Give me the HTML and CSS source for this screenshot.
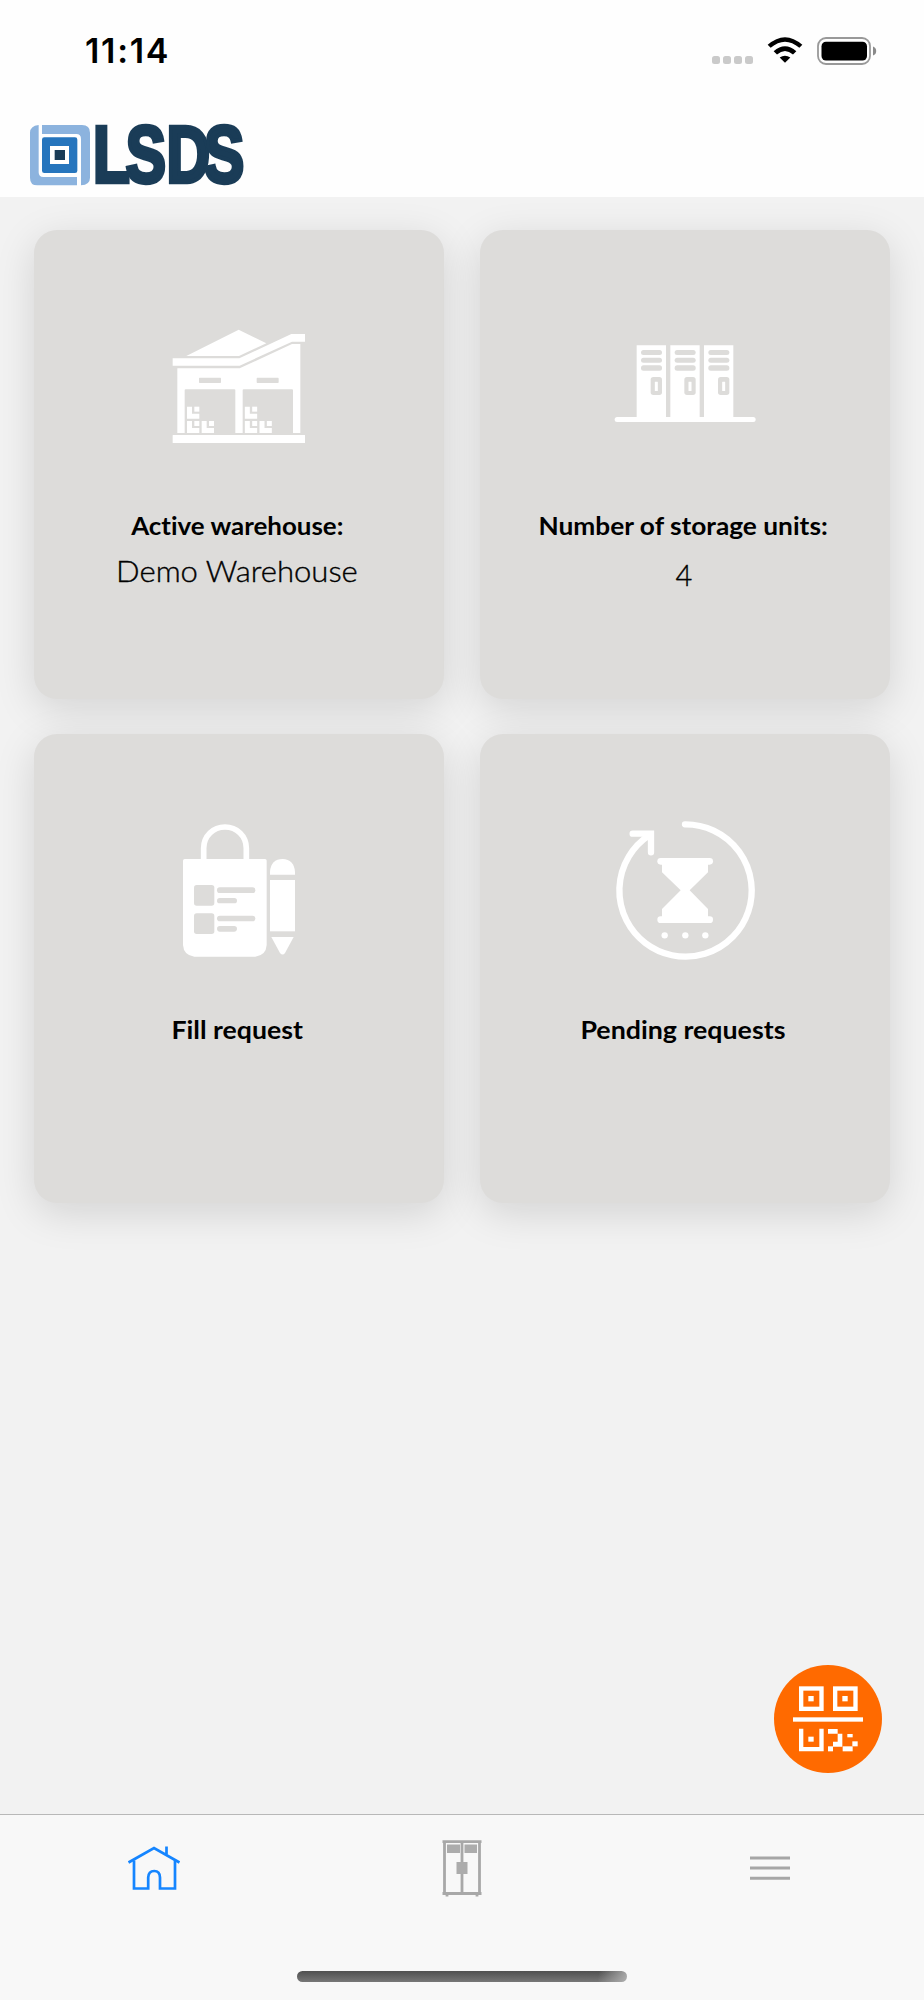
FILE: index.html
```
<!DOCTYPE html>
<html lang="en">
<head>
<meta charset="utf-8">
<title>LSDS</title>
<link rel="stylesheet" href="styles.css">
</head>
<body>
<div class="app">
  <header class="header">
    <div class="status">
      <span class="clock">11:14</span>
      <div class="indicators">
        <div class="signal"><i></i><i></i><i></i><i></i></div>
        <svg class="wifi" viewBox="0 0 108 80" width="36" height="27">
          <path d="M2 23Q54-23 106 23L97 32Q54-5 11 32Z"/>
          <path d="M20 42Q54 13 88 42L78 52Q54 31 30 52Z"/>
          <path d="M38 61Q54 50 70 61L54 77Z"/>
        </svg>
        <svg class="battery" viewBox="0 0 60 28" width="60" height="28">
          <rect x="1" y="1" width="52" height="26" rx="8" fill="none" stroke="#999" stroke-width="1.8"/>
          <rect x="4.5" y="4.7" width="45.5" height="18.8" rx="4.5" fill="#000"/>
          <path d="M56 9.5Q59.2 10.5 59.2 14Q59.2 17.500 56 18.500Z" fill="#8a8a8a"/>
        </svg>
      </div>
    </div>
    <svg class="logo" viewBox="84 366 660 195" width="220" height="65" role="img" aria-label="LSDS">
      <path fill="#8cb3de" d="M116 375V517Q116 531 130 531H231V556H112Q90 556 90 533V398Q90 378 116 375Z"/>
      <path fill="#8cb3de" d="M126 375H246Q270 375 270 398V533Q270 554 243 556V417Q243 402 229 402H126Z"/>
      <rect x="126" y="412" width="106" height="107" rx="7" fill="#2675bd"/>
      <rect x="150" y="438" width="57" height="54" fill="#fff"/>
      <rect x="164" y="450" width="31" height="30" fill="#1a3c57"/>
      <g transform="translate(0 546) scale(.76 1)">
        <text class="logo-text" x="367 496 657 805" y="0">LSDS</text>
      </g>
    </svg>
  </header>

  <main class="content">
    <section class="cards">
      <article class="card">
        <svg class="card-icon" viewBox="-3 -12 540 480">
          <path d="M109 138L266 59L349 100L267 138Z"/>
          <path d="M68 145H268L424 72H465V95H426L269 167H68Z"/>
          <path fill-rule="evenodd" d="M82 175H269L426 102H451V369H429V241Q429 238 426 238H281Q278 238 278 241V369H256V241Q256 238 253 238H107Q104 238 104 241V369H82ZM149 203Q147 203 147 206V216Q147 219 149 219H211Q213 219 213 216V206Q213 203 211 203ZM322 203Q320 203 320 206V216Q320 219 322 219H384Q386 219 386 216V206Q386 203 384 203Z"/>
          <rect x="68" y="375" width="397" height="24" rx="1"/>
          <g id="boxes">
            <path d="M111 290H126V311H148V326H111Z"/><path d="M133 290H148V305H133Z"/>
            <path d="M111 333H126V354H148V369H111Z"/><path d="M133 333H148V348H133Z"/>
            <path d="M155 333H170V354H192V369H155Z"/><path d="M177 333H192V348H177Z"/>
          </g>
          <use href="#boxes" x="173.500"/>
        </svg>
        <h2 class="card-title title-active">Active warehouse:</h2>
        <p class="card-value value-name">Demo Warehouse</p>
      </article>

      <article class="card">
        <svg class="card-icon" viewBox="-15 -42 540 480">
          <rect x="44" y="291" width="423" height="15" rx="7.500"/>
          <g id="locker">
            <path d="M110 76H198V293H110Z"/>
            <g class="cut"><rect x="123" y="90" width="63" height="15" rx="7.500"/><rect x="123" y="113" width="63" height="15" rx="7.500"/><rect x="123" y="136" width="63" height="16" rx="7.500"/><rect x="152" y="171" width="34" height="54" rx="8"/></g>
            <rect x="164.500" y="185" width="9" height="28" rx="1"/>
          </g>
          <use href="#locker" x="101"/>
          <use href="#locker" x="202"/>
        </svg>
        <h2 class="card-title title-units">Number of storage units:</h2>
        <p class="card-value value-count">4</p>
      </article>

      <article class="card">
        <svg class="card-icon" viewBox="-33 0 540 480">
          <path class="line" stroke-width="17" d="M131 150V115C131 77 160 51 195 51S259 77 259 115V150"/>
          <path d="M74 147H315Q320 147 320 152V405Q318 436 286 440H103Q71 436 69 405V152Q69 147 74 147Z"/>
          <g class="cut">
            <rect x="102" y="225" width="61" height="62" rx="8"/><rect x="102" y="310" width="61" height="62" rx="8"/>
            <rect x="171" y="232" width="115" height="17" rx="8.500"/><rect x="171" y="264" width="60" height="16" rx="8"/>
            <rect x="171" y="317" width="115" height="17" rx="8.500"/><rect x="171" y="348" width="60" height="17" rx="8.500"/>
          </g>
          <path d="M330 194V185Q333 147 368 147Q402 149 405 185V194Z"/>
          <rect x="330" y="210" width="75" height="154"/>
          <path d="M334 381H401L375 429Q368 438 360 429Z"/>
        </svg>
        <h2 class="card-title title-fill">Fill request</h2>
      </article>

      <article class="card">
        <svg class="card-icon" viewBox="-15 0 540 480">
          <path class="line" stroke-width="19" d="M255 43A198.500 198.500 0 1 1 147 76"/>
          <path class="line" stroke-width="19" stroke-linejoin="miter" d="M98 71H153V127"/>
          <rect x="172" y="144" width="167" height="20" rx="10"/>
          <rect x="172" y="319" width="167" height="20" rx="10"/>
          <path d="M186 160H324V187L269 241L324 297V324H186V297L242 241L186 187Z"/>
          <circle cx="194" cy="376" r="9.500"/><circle cx="256" cy="376" r="9.500"/><circle cx="316" cy="376" r="9.500"/>
        </svg>
        <h2 class="card-title title-pending">Pending requests</h2>
      </article>
    </section>

    <button class="scan" aria-label="Scan">
      <svg viewBox="42 44 324 324" width="108" height="108">
        <g fill="none" stroke="#fff" stroke-width="13">
          <rect x="123.500" y="114.500" width="61" height="61"/>
          <rect x="225.500" y="114.500" width="61" height="61"/>
          <path d="M123.500 235V296.500H184.500V235"/>
        </g>
        <g fill="#fff">
          <rect x="145" y="137" width="16" height="16"/><rect x="247" y="137" width="16" height="16"/><rect x="145" y="259" width="16" height="15"/>
          <rect x="99" y="201" width="210" height="13"/>
          <path d="M204 236H233V250H247V289H219V274H233V250H204Z"/>
          <rect x="262" y="251" width="16" height="10"/><rect x="277" y="273" width="16" height="15"/>
          <rect x="248" y="288" width="30" height="15"/><rect x="204" y="288" width="15" height="15"/>
        </g>
      </svg>
    </button>
  </main>

  <footer class="tabbar">
    <nav class="tabs">
      <a class="tab"><svg viewBox="0 0 54 60" width="54" height="60">
        <g fill="none" stroke="#1585ff" stroke-width="2.700">
          <path d="M1.500 22.500L27 8L52.500 22.500M39.500 14.500V6.500"/>
          <path d="M7 20.500V48.500H21.200V37.500Q21.500 31 27.200 31T33 37.500V48.500H48V20.500"/>
        </g>
      </svg></a>
      <a class="tab"><svg viewBox="0 0 42 60" width="42" height="60">
        <g fill="none" stroke="#a8a8a8" stroke-width="2.800">
          <path d="M1.500 1.700H40.500M1.500 53.500H40.500M3.500 2V53M21 2V53M38.500 2V53"/>
          <path d="M6 54V56.500M36 54V56.500"/>
        </g>
        <path fill="#acacac" d="M6 4.500H19V13H6ZM23.500 4.500H36V13H23.500ZM15.500 22H26.500V34H15.500Z"/>
      </svg></a>
      <a class="tab"><svg viewBox="0 0 42 60" width="42" height="60">
        <path fill="none" stroke="#a6a6a6" stroke-width="3" d="M1 18H41M1 28H41M1 38.300H41"/>
      </svg></a>
    </nav>
    <div class="home-indicator"></div>
  </footer>
</div>
</body>
</html>
```
FILE: styles.css
```
* { box-sizing: border-box; }
body { margin: 0; background: #f2f2f2; color: #000; font-family: Lato, "Open Sans", sans-serif; }
.app { width: 924px; height: 2000px; display: flex; flex-direction: column; overflow: hidden; }

.header { height: 197px; background: #fefefe; flex: none; }
.status { height: 98px; display: flex; align-items: center; justify-content: space-between; padding: 3px 47px 0 85px; }
.clock { font: 600 34px/40px Inter, sans-serif; letter-spacing: 1.7px; }
.indicators { display: flex; align-items: center; }
.signal { display: flex; gap: 3px; padding-top: 18px; margin-right: 14px; }
.signal i { width: 8px; height: 8px; border-radius: 2.5px; background: #cacaca; }
.wifi { margin-right: 14px; margin-top: -1px; }
.logo { display: block; margin: 24px 0 0 28px; overflow: visible; }
.logo-text { font: 700 238px "Liberation Sans", Arial, sans-serif; fill: #1a3c57; stroke: #1a3c57; stroke-width: 13px; }

.content { flex: 1; display: flex; flex-direction: column; justify-content: space-between; padding: 33px 34px 41px; }
.cards { display: grid; grid-template-columns: 410px 410px; grid-auto-rows: 469px; gap: 35px 36px; }
.card { display: flex; flex-direction: column; align-items: center; padding-top: 76px; border-radius: 23px; background: #dddcda; box-shadow: 0 10px 40px rgba(0, 0, 0, 0.13); }
.card-icon { width: 180px; height: 160px; fill: #fff; flex: none; }
.line { fill: none; stroke: #fff; stroke-linecap: round; }
.cut { fill: #dddcda; }
.card-title { margin: 44px 4px 0 0; font-size: 24px; line-height: 32px; font-weight: 700; white-space: nowrap; font-variant-ligatures: none; }
.title-active { transform: scaleX(1.08); }
.title-units { transform: scaleX(1.095); }
.title-fill { transform: scaleX(1.11); }
.title-pending { transform: scaleX(1.115); }
.card-value { margin: 9px 4px 0 0; font-size: 29px; line-height: 40px; font-weight: 300; white-space: nowrap; -webkit-text-stroke: 0.35px #000; }
.value-name { transform: scaleX(1.07); }
.value-count { margin: 13px 2px 0 0; }

.scan { align-self: flex-end; width: 108px; height: 108px; margin-right: 8px; padding: 0; border: 0; border-radius: 50%; background: #ff6a00; }
.scan svg { display: block; }

.tabbar { flex: none; height: 186px; border-top: 1px solid #b8b8b8; background: #f8f8f8; display: flex; flex-direction: column; align-items: center; justify-content: space-between; padding: 25px 0 18px; }
.tabs { width: 100%; display: grid; grid-template-columns: repeat(3, 1fr); }
.tab { display: flex; justify-content: center; }
.home-indicator { width: 330px; height: 11px; border-radius: 6px; background: linear-gradient(100deg, transparent 91%, rgba(190, 190, 190, 0.8)), linear-gradient(#505050, #777); }
```
